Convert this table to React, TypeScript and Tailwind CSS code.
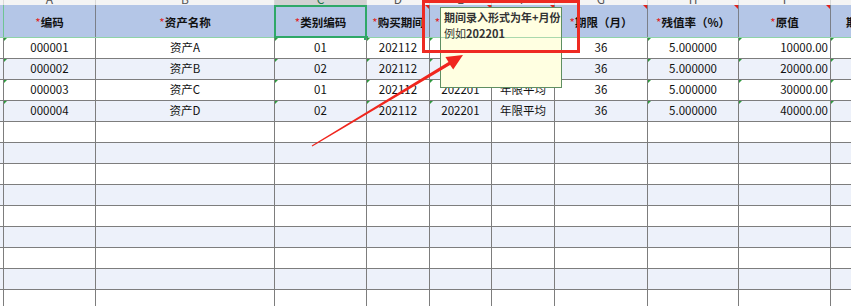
import React from "react";

type Col = { w: string; letter: string; head: string; star: boolean; align: string; note: boolean; mark: boolean };

const cols: Col[] = [
  { w: "w-[92px]", letter: "A", head: "编码", star: true, align: "justify-center", note: false, mark: true },
  { w: "w-[179px]", letter: "B", head: "资产名称", star: true, align: "justify-center", note: false, mark: false },
  { w: "w-[92px]", letter: "C", head: "类别编码", star: true, align: "justify-center", note: false, mark: true },
  { w: "w-[63px]", letter: "D", head: "购买期间", star: true, align: "justify-center", note: true, mark: true },
  { w: "w-[62px]", letter: "E", head: "入账期间", star: true, align: "justify-center", note: true, mark: true },
  { w: "w-[63px]", letter: "F", head: "折旧方法", star: true, align: "justify-center", note: true, mark: false },
  { w: "w-[93px]", letter: "G", head: "期限（月）", star: true, align: "justify-center", note: true, mark: false },
  { w: "w-[91px]", letter: "H", head: "残值率（%）", star: true, align: "justify-center", note: true, mark: true },
  { w: "w-[92px]", letter: "I", head: "原值", star: true, align: "justify-end pr-[2px]", note: true, mark: true },
  { w: "w-[100px]", letter: "J", head: "期初累计折旧", star: false, align: "justify-center", note: false, mark: true },
];

const data: string[][] = [
  ["000001", "资产A", "01", "202112", "202201", "年限平均", "36", "5.000000", "10000.00", ""],
  ["000002", "资产B", "02", "202112", "202201", "年限平均", "36", "5.000000", "20000.00", ""],
  ["000003", "资产C", "01", "202112", "202201", "年限平均", "36", "5.000000", "30000.00", ""],
  ["000004", "资产D", "02", "202112", "202201", "年限平均", "36", "5.000000", "40000.00", ""],
];

const emptyRows = 10;

export default function App() {
  const rows: string[][] = [...data];
  for (let i = 0; i < emptyRows; i++) rows.push(["", "", "", "", "", "", "", "", "", ""]);

  return (
    <div
      className="relative w-[851px] h-[306px] overflow-hidden bg-white text-[#111]"
      style={{ fontFamily: '"Noto Sans CJK SC", "Noto Sans", sans-serif' }}
    >
      {/* column letters */}
      <div className="flex h-[5px] overflow-hidden bg-[#f4f4f4]">
        <div className="w-[4px] shrink-0 border-r border-[#d8d8d8]" />
        {cols.map((c) => (
          <div
            key={c.letter}
            className={`${c.w} shrink-0 flex justify-center overflow-hidden border-r border-[#d8d8d8] ${
              c.letter === "C" ? "bg-[#d2d2d2] text-[#217346]" : "text-[#555]"
            }`}
          >
            <span className="text-[12px] leading-[12px] -mt-[7px]">{c.letter}</span>
          </div>
        ))}
      </div>

      {/* header row */}
      <div className="flex h-[33px] border-b border-[#8fd3a8] bg-[#b4c6e7]">
        <div className="w-[4px] shrink-0 border-r border-[#6fc493]" />
        {cols.map((c) => (
          <div
            key={c.letter}
            className={`${c.w} relative shrink-0 flex items-center justify-center pt-[3px] border-r border-[#7b7f88] text-[11.5px] font-bold whitespace-nowrap overflow-visible`}
          >
            {c.star && <span className="text-[#e0201b] font-normal">*</span>}
            <span>{c.head}</span>
            {c.note && (
              <div className="absolute right-0 top-0 w-0 h-0 border-t-[4px] border-l-[4px] border-t-[#e0201b] border-l-transparent" />
            )}
            {c.letter === "C" && (
              <>
                <div className="absolute -left-[1px] top-0 -right-[1px] -bottom-[1px] border-2 border-[#2fa868]" />
                <div className="absolute -right-[2px] -bottom-[3px] w-[4px] h-[4px] bg-[#2fa868]" />
              </>
            )}
          </div>
        ))}
      </div>

      {/* data rows */}
      {rows.map((r, ri) => (
        <div key={ri} className={`flex h-[21px] border-b border-[#7d7d7d] ${ri % 2 === 1 ? "bg-[#edf1fa]" : "bg-white"}`}>
          <div className="w-[4px] shrink-0 border-r border-[#7d7d7d]" />
          {cols.map((c, ci) => (
            <div
              key={c.letter}
              className={`${c.w} relative shrink-0 flex items-center ${c.align} border-r border-[#7d7d7d] text-[11.5px] whitespace-nowrap overflow-hidden`}
            >
              {r[ci]}
              {ri < 4 && c.mark && (
                <div className="absolute left-0 top-0 w-0 h-0 border-t-[3px] border-r-[3px] border-t-[#2e9a3e] border-r-transparent" />
              )}
            </div>
          ))}
        </div>
      ))}

      {/* comment box */}
      <div className="absolute left-[440px] top-[7px] w-[122px] h-[81px] border border-[#5f8f62] bg-[#ffffe1] overflow-hidden">
        <div className="absolute left-0 right-0 top-[29px] h-px bg-[#a9d9ad]" />
        <div className="relative pl-[3px] pt-[1px] text-[11px] leading-[16px] font-bold text-[#333] whitespace-nowrap">
          <div>期间录入形式为年+月份</div>
          <div>
            <span className="font-normal">例如</span>202201
          </div>
        </div>
      </div>

      {/* red annotation rectangle */}
      <div className="absolute left-[422px] top-0 w-[158px] h-[53px] border-[3px] border-[#ee2a22]" />

      {/* red arrow */}
      <svg className="absolute left-0 top-0 pointer-events-none" width="851" height="306" viewBox="0 0 851 306">
        <polygon
          points="312.3,146.4 450.1,64.9 453.2,69.6 463,55 445.4,57.0 448.5,61.9 311.7,145.6"
          fill="#f0261e"
        />
      </svg>
    </div>
  );
}
